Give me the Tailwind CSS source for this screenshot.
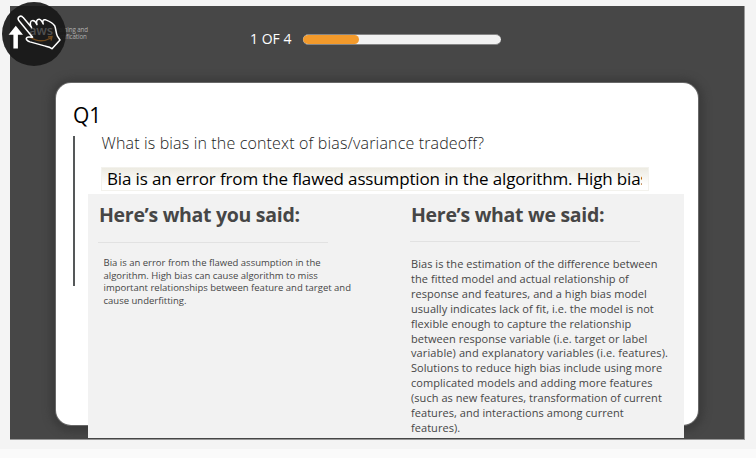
<!DOCTYPE html>
<html lang="en">
<head>
<meta charset="utf-8">
<title>Knowledge check</title>
<script src="https://cdn.jsdelivr.net/npm/@tailwindcss/browser@4"></script>
</head>
<body class="h-[458px] w-[756px] overflow-hidden bg-[#f4f4f4] font-['Open_Sans','Noto_Sans',sans-serif]">
<div class="relative flex h-[458px] flex-col">
  <main class="mt-[6px] ml-[10px] h-[434px] w-[735px] shrink-0 border-r border-b border-[#999] bg-[#474747]">
    <header class="flex h-[77px] items-start">
      <div class="flex w-[240px] pt-[21px] pl-[43px]">
        <div class="text-[6.2px] leading-[6.5px] tracking-[-0.1px] text-[#b0b0b0]"><span class="block whitespace-nowrap">Training and</span><span class="block whitespace-nowrap">Certification</span></div>
      </div>
      <div class="w-[53px] pt-[23px] text-[14px] leading-5 whitespace-nowrap text-white">1 OF 4</div>
      <div class="mt-[28px] h-[11px] w-[198px] overflow-hidden rounded-full border-y border-[#858585] bg-[#f2f2f2]">
        <div class="h-full w-[56px] rounded-full bg-[#f39a2b]"></div>
      </div>
    </header>
    <section class="ml-[46px] flex h-[342px] w-[642px] flex-col rounded-[15px] bg-white pl-[18px] shadow-[0_0_0_1px_#686868,0_1px_7px_6px_#3c3c3c]">
      <h1 class="mt-[18px] -ml-px h-[35px] shrink-0 text-[21px] leading-[28px] text-black">Q1</h1>
      <div class="flex shrink-0">
        <div class="-ml-px h-[150px] w-[2px] bg-[#555859]"></div>
        <div class="ml-[13px] w-[596px]">
          <p class="ml-[13px] h-[31px] pl-[0.5px] text-[16px] leading-[15px] font-light tracking-[0.155px] whitespace-nowrap text-[#1c1c1c]">What is bias in the context of bias/variance tradeoff?</p>
          <div class="ml-[13px] h-[24px] w-[548px] border border-[#f3f2ed] bg-linear-to-b from-[#edebe2] to-white to-80% pr-[6px] pl-[5px]">
            <div class="overflow-hidden text-[17px] leading-[22px] tracking-[-0.145px] whitespace-nowrap text-black">Bia is an error from the flawed assumption in the algorithm. High bias can cause</div>
          </div>
          <div class="mt-[3px] flex h-[244px] bg-[#f2f2f2] text-[#464646]">
            <div class="w-[323px] shrink-0 pl-[11px]">
              <h2 class="h-[48px] pt-[7px] text-[19.5px] leading-[28px] font-bold tracking-[-0.3px] whitespace-nowrap">Here’s what you said:</h2>
              <div class="-ml-px h-px w-[230px] bg-[#e2e2e2]"></div>
              <p class="pt-[14px] pl-[4.5px] text-[9.5px] leading-[12.7px] whitespace-nowrap">
                <span class="block">Bia is an error from the flawed assumption in the</span>
                <span class="block">algorithm. High bias can cause algorithm to miss</span>
                <span class="block">important relationships between feature and target and</span>
                <span class="block">cause underfitting.</span>
              </p>
            </div>
            <div>
              <h2 class="h-[47px] pt-[7px] text-[19.5px] leading-[28px] font-bold tracking-[-0.3px] whitespace-nowrap">Here’s what we said:</h2>
              <div class="-ml-px h-px w-[230px] bg-[#e2e2e2]"></div>
              <p class="pt-[15px] text-[11px] leading-[14.9px] tracking-[0.05px] whitespace-nowrap">
                <span class="block">Bias is the estimation of the difference between</span>
                <span class="block">the fitted model and actual relationship of</span>
                <span class="block">response and features, and a high bias model</span>
                <span class="block">usually indicates lack of fit, i.e. the model is not</span>
                <span class="block">flexible enough to capture the relationship</span>
                <span class="block">between response variable (i.e. target or label</span>
                <span class="block tracking-[0.11px]">variable) and explanatory variables (i.e. features).</span>
                <span class="block">Solutions to reduce high bias include using more</span>
                <span class="block">complicated models and adding more features</span>
                <span class="block">(such as new features, transformation of current</span>
                <span class="block">features, and interactions among current</span>
                <span class="block">features).</span>
              </p>
            </div>
          </div>
        </div>
      </div>
    </section>
  </main>
  <footer class="mt-[9px] h-[9px] bg-[#fafafa]"></footer>

  <div class="absolute top-[2px] left-[2px] size-[64px] rounded-full bg-[#181818]/93">
    <span class="absolute top-[21px] left-[27px] text-[13px] leading-[15px] font-semibold tracking-[-0.2px] text-[#505050]">aws</span>
    <svg class="absolute inset-0" width="64" height="64" viewBox="2 2 64 64" fill="none">
      <path d="M30 37Q40 44 51 38M48 37l4-.5-1 4" stroke="#70491c" stroke-width="1.4"/>
      <path d="M15.8 25.7 23 34.7H17.9V48.4H13.4V34.7H8.6Z" fill="#fff"/>
      <path d="M18.8 20.6C16.6 17.2 20.8 14.4 23.2 17.6L31.6 27.6C29.2 23.6 30.4 20.6 32.8 20.6C34.8 20.6 36 22.4 37 24.6C35.8 21 37 19.2 39.2 19.3C41.2 19.5 42.2 21.6 43.2 24C42.2 20.6 43.4 19.2 45.4 19.8C49 21.2 52.8 22.6 54.8 26C56 29 55.8 33 57.4 36.2L60 40L52 48.8C50 46.8 48.5 46.6 45.4 46.1L30 41.9C25.2 40.4 25.2 37 28.9 37.1L32.6 37.2Z" stroke="#fff" stroke-width="1.5" stroke-linejoin="round"/>
    </svg>
  </div>
</div>
</body>
</html>
